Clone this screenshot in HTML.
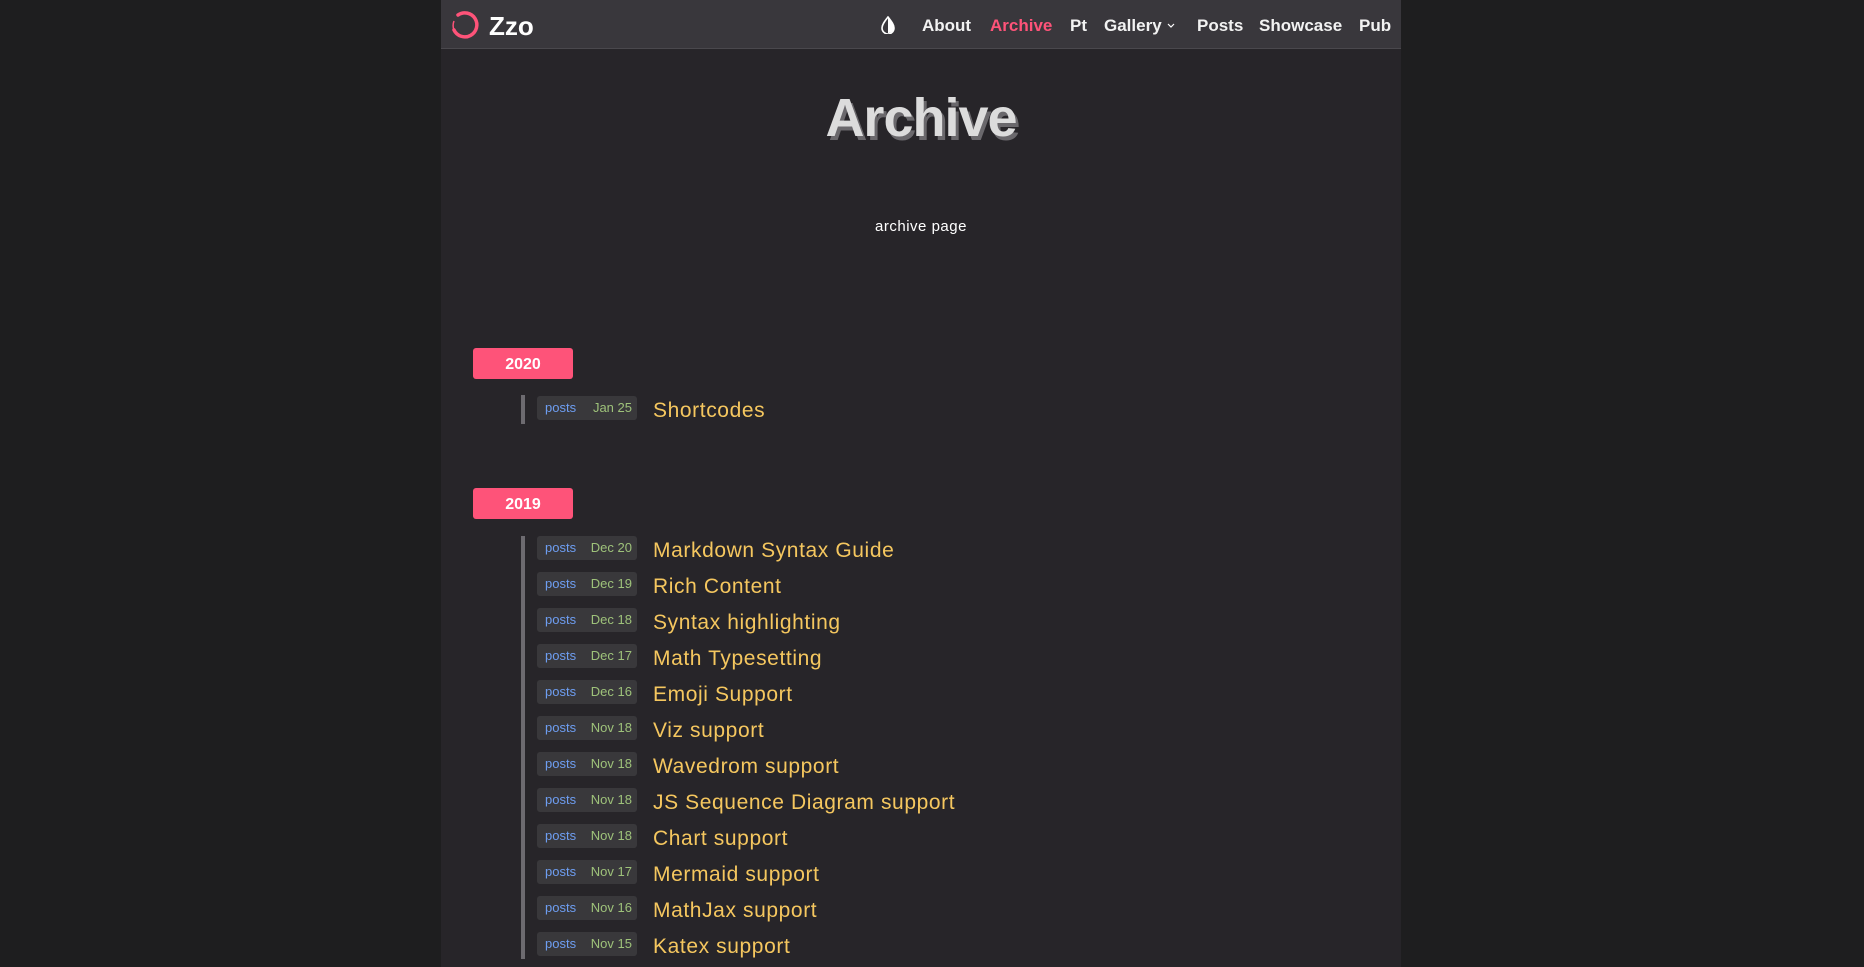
<!DOCTYPE html>
<html><head><meta charset="utf-8"><style>
*{margin:0;padding:0;box-sizing:border-box}
body{width:1864px;height:967px;background:#1e1e1f;font-family:"Liberation Sans",sans-serif;position:relative;overflow:hidden}
#c{position:absolute;left:441px;top:0;width:960px;height:967px;background:#272529}
#h{position:absolute;left:441px;top:0;width:960px;height:49px;background:#39373c;border-bottom:1px solid #4a484d}
.n{position:absolute;top:16px;font-size:17px;font-weight:bold;color:#f2f2f2;letter-spacing:0px}
.abs{position:absolute}
.yr{position:absolute;left:473px;width:100px;height:31px;background:#fe5379;border-radius:3px;color:#fff;font-weight:bold;font-size:16px;text-align:center;line-height:33px}
.bar{position:absolute;left:521px;width:4px;background:#6d6b70}
.tag{position:absolute;left:537px;width:100px;height:24px;background:#39383b;border-radius:3px;font-size:13px;line-height:24px}
.tag .p{position:absolute;left:8px;color:#6e9ef2}
.tag .d{position:absolute;right:5px;color:#9ec27a}
.t{position:absolute;left:653px;font-size:21px;color:#f5c75f;line-height:24px;letter-spacing:0.6px;margin-top:2px}
</style></head><body>
<div id="c"></div>
<div id="h"></div>
<svg class="abs" style="left:449px;top:9px" width="32" height="32" viewBox="0 0 32 32"><path d="M9 6 A12 12 0 1 1 5 21" fill="none" stroke="#fe5379" stroke-width="3.5" stroke-linecap="round"/><path d="M5 12 A12 12 0 0 0 5 21" fill="none" stroke="#fe5379" stroke-width="1.5"/></svg>
<div class="abs" style="left:489px;top:11px;font-size:26px;font-weight:bold;color:#fff">Zzo</div>
<svg class="abs" style="left:881px;top:16px" width="14" height="18" viewBox="0 0 14 18"><path d="M7 1 C3 6 1 9 1 12 A6 6 0 0 0 13 12 C13 9 11 6 7 1Z" fill="none" stroke="#fff" stroke-width="1.6"/><path d="M7 1 C11 6 13 9 13 12 A6 6 0 0 1 7 17Z" fill="#fff"/></svg>
<div class="n" style="left:922px">About</div>
<div class="n" style="left:990px;color:#fe5379">Archive</div>
<div class="n" style="left:1070px">Pt</div>
<div class="n" style="left:1104px">Gallery</div>
<svg class="abs" style="left:1167px;top:23px" width="8" height="6" viewBox="0 0 8 6"><path d="M1 1 L4 4 L7 1" fill="none" stroke="#fff" stroke-width="1.2"/></svg>
<div class="n" style="left:1197px">Posts</div>
<div class="n" style="left:1259px">Showcase</div>
<div class="n" style="left:1359px">Pub</div>
<div class="abs" style="left:441px;width:960px;top:87px;text-align:center;font-size:54px;font-weight:bold;color:#dcdcdc;text-shadow:3px 4px 0 #6a686c;letter-spacing:-1px">Archive</div>
<div class="abs" style="left:441px;width:960px;top:218px;text-align:center;font-size:15px;color:#fff;letter-spacing:0.5px">archive page</div>
<div class="yr" style="top:348px">2020</div>
<div class="bar" style="top:395px;height:29px"></div>
<div class="tag" style="top:396px"><span class="p">posts</span><span class="d">Jan 25</span></div>
<div class="t" style="top:397px">Shortcodes</div>
<div class="yr" style="top:488px">2019</div>
<div class="bar" style="top:536px;height:423px"></div>
<div class="tag" style="top:536px"><span class="p">posts</span><span class="d">Dec 20</span></div><div class="t" style="top:537px">Markdown Syntax Guide</div>
<div class="tag" style="top:572px"><span class="p">posts</span><span class="d">Dec 19</span></div><div class="t" style="top:573px">Rich Content</div>
<div class="tag" style="top:608px"><span class="p">posts</span><span class="d">Dec 18</span></div><div class="t" style="top:609px">Syntax highlighting</div>
<div class="tag" style="top:644px"><span class="p">posts</span><span class="d">Dec 17</span></div><div class="t" style="top:645px">Math Typesetting</div>
<div class="tag" style="top:680px"><span class="p">posts</span><span class="d">Dec 16</span></div><div class="t" style="top:681px">Emoji Support</div>
<div class="tag" style="top:716px"><span class="p">posts</span><span class="d">Nov 18</span></div><div class="t" style="top:717px">Viz support</div>
<div class="tag" style="top:752px"><span class="p">posts</span><span class="d">Nov 18</span></div><div class="t" style="top:753px">Wavedrom support</div>
<div class="tag" style="top:788px"><span class="p">posts</span><span class="d">Nov 18</span></div><div class="t" style="top:789px">JS Sequence Diagram support</div>
<div class="tag" style="top:824px"><span class="p">posts</span><span class="d">Nov 18</span></div><div class="t" style="top:825px">Chart support</div>
<div class="tag" style="top:860px"><span class="p">posts</span><span class="d">Nov 17</span></div><div class="t" style="top:861px">Mermaid support</div>
<div class="tag" style="top:896px"><span class="p">posts</span><span class="d">Nov 16</span></div><div class="t" style="top:897px">MathJax support</div>
<div class="tag" style="top:932px"><span class="p">posts</span><span class="d">Nov 15</span></div><div class="t" style="top:933px">Katex support</div>
</body></html>
